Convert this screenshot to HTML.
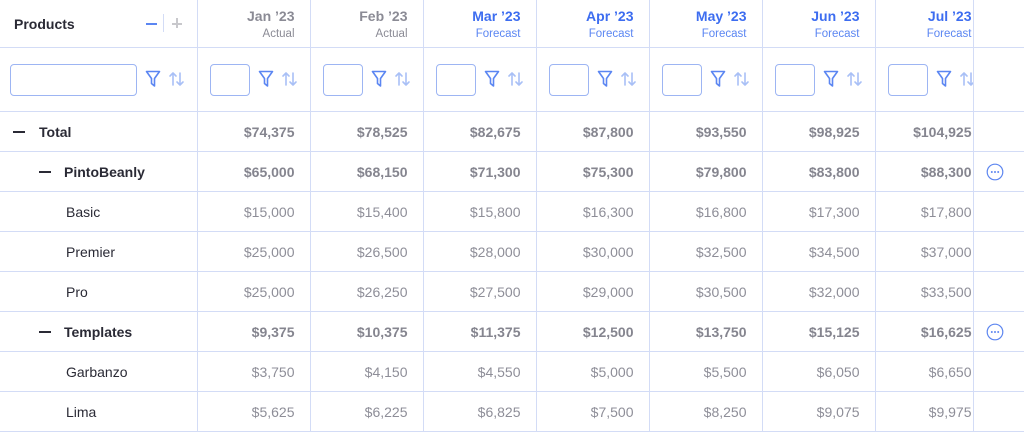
<!DOCTYPE html><html><head><meta charset="utf-8"><style>
*{box-sizing:border-box;margin:0;padding:0}
body{width:1024px;height:429px;overflow:hidden;background:#fff;font-family:"Liberation Sans",sans-serif}
table{border-collapse:collapse;table-layout:fixed;width:1024px}
td{border:1px solid #d3dcf6;overflow:hidden;white-space:nowrap;padding:0;position:relative}
tr:first-child td{border-top:none}
td:first-child{border-left:none}
.h td{height:47px}
.f td{height:64px}
.r td{height:40px;padding-top:1px}
.num{text-align:right;padding-right:15px;font-size:14px;color:#8e8e98}
.b .num{font-weight:bold;color:#85858f}
.last{padding-right:1px!important}
.mh{text-align:right;padding-right:15px}
.mh .m{font-size:14px;font-weight:bold;color:#8b8b95;margin-top:1px}
.mh .s{font-size:11.5px;color:#8b8b95;margin-top:4px}
.fc .m{color:#3d6df0}.fc .s{color:#5b86f2}
.inp{position:absolute;top:16px;left:12px;width:40px;height:32px;border:1px solid #9db5f3;border-radius:4px}
.fi{position:absolute;top:22px}
.lab{font-size:14px;color:#2a2a35;padding-left:66px}
.b .lab{font-weight:bold}
.dash{position:absolute;top:19px;width:12px;height:2px;background:#2a2a35}
.more{position:absolute;left:12px;top:11px}
</style></head><body>
<svg width="0" height="0" style="position:absolute"><defs>
<symbol id="fl" viewBox="0 0 16 18"><path d="M1.5 1.5h13l-5 7v7.5l-3-2.5v-5z" fill="none" stroke="#5b86f2" stroke-width="1.6" stroke-linejoin="round"/></symbol>
<symbol id="so" viewBox="0 0 18 18"><path d="M5 15V3M2 6l3-3 3 3M12 3v12M9 12l3 3 3-3" fill="none" stroke="#a9c0f6" stroke-width="1.6" stroke-linecap="round" stroke-linejoin="round"/></symbol>
<symbol id="mo" viewBox="0 0 18 18"><circle cx="9" cy="9" r="7.8" fill="none" stroke="#5d86f0" stroke-width="1.2"/><circle cx="5.8" cy="9" r="1" fill="#5d86f0"/><circle cx="9" cy="9" r="1" fill="#5d86f0"/><circle cx="12.2" cy="9" r="1" fill="#5d86f0"/></symbol>
</defs></svg>
<table>
<colgroup><col style="width:197px"><col style="width:113px"><col style="width:113px"><col style="width:113px"><col style="width:113px"><col style="width:113px"><col style="width:113px"><col style="width:98px"><col style="width:51px"></colgroup>
<tr class="h">
<td><span style="position:absolute;left:14px;top:16px;font-size:14px;font-weight:bold;color:#2a2a35">Products</span>
<span style="position:absolute;left:146px;top:23px;width:11px;height:2px;background:#5b86f2"></span>
<span style="position:absolute;left:163px;top:14px;width:1px;height:18px;background:#d3dcf6"></span>
<span style="position:absolute;left:172px;top:23px;width:10px;height:2px;background:#c8c8cc"></span>
<span style="position:absolute;left:176px;top:18px;width:2px;height:10px;background:#c8c8cc"></span></td>
<td class="mh"><div class="m">Jan ’23</div><div class="s">Actual</div></td>
<td class="mh"><div class="m">Feb ’23</div><div class="s">Actual</div></td>
<td class="mh fc"><div class="m">Mar ’23</div><div class="s">Forecast</div></td>
<td class="mh fc"><div class="m">Apr ’23</div><div class="s">Forecast</div></td>
<td class="mh fc"><div class="m">May ’23</div><div class="s">Forecast</div></td>
<td class="mh fc"><div class="m">Jun ’23</div><div class="s">Forecast</div></td>
<td class="mh fc last"><div class="m">Jul ’23</div><div class="s">Forecast</div></td>
<td></td></tr>
<tr class="f">
<td><div class="inp" style="left:10px;width:127px"></div><svg class="fi" style="left:145px" width="16" height="18"><use href="#fl"/></svg><svg class="fi" style="left:168px" width="18" height="18"><use href="#so"/></svg></td>
<td><div class="inp"></div><svg class="fi" style="left:60px" width="16" height="18"><use href="#fl"/></svg><svg class="fi" style="left:83px" width="18" height="18"><use href="#so"/></svg></td>
<td><div class="inp"></div><svg class="fi" style="left:60px" width="16" height="18"><use href="#fl"/></svg><svg class="fi" style="left:83px" width="18" height="18"><use href="#so"/></svg></td>
<td><div class="inp"></div><svg class="fi" style="left:60px" width="16" height="18"><use href="#fl"/></svg><svg class="fi" style="left:83px" width="18" height="18"><use href="#so"/></svg></td>
<td><div class="inp"></div><svg class="fi" style="left:60px" width="16" height="18"><use href="#fl"/></svg><svg class="fi" style="left:83px" width="18" height="18"><use href="#so"/></svg></td>
<td><div class="inp"></div><svg class="fi" style="left:60px" width="16" height="18"><use href="#fl"/></svg><svg class="fi" style="left:83px" width="18" height="18"><use href="#so"/></svg></td>
<td><div class="inp"></div><svg class="fi" style="left:60px" width="16" height="18"><use href="#fl"/></svg><svg class="fi" style="left:83px" width="18" height="18"><use href="#so"/></svg></td>
<td><div class="inp"></div><svg class="fi" style="left:60px" width="16" height="18"><use href="#fl"/></svg><svg class="fi" style="left:83px" width="18" height="18"><use href="#so"/></svg></td>
<td></td></tr>
<tr class="r b"><td class="lab" style="padding-left:39px"><span class="dash" style="left:13px"></span>Total</td><td class="num">$74,375</td><td class="num">$78,525</td><td class="num">$82,675</td><td class="num">$87,800</td><td class="num">$93,550</td><td class="num">$98,925</td><td class="num last">$104,925</td><td></td></tr>
<tr class="r b"><td class="lab" style="padding-left:64px"><span class="dash" style="left:39px"></span>PintoBeanly</td><td class="num">$65,000</td><td class="num">$68,150</td><td class="num">$71,300</td><td class="num">$75,300</td><td class="num">$79,800</td><td class="num">$83,800</td><td class="num last">$88,300</td><td><svg class="more" width="18" height="18"><use href="#mo"/></svg></td></tr>
<tr class="r"><td class="lab">Basic</td><td class="num">$15,000</td><td class="num">$15,400</td><td class="num">$15,800</td><td class="num">$16,300</td><td class="num">$16,800</td><td class="num">$17,300</td><td class="num last">$17,800</td><td></td></tr>
<tr class="r"><td class="lab">Premier</td><td class="num">$25,000</td><td class="num">$26,500</td><td class="num">$28,000</td><td class="num">$30,000</td><td class="num">$32,500</td><td class="num">$34,500</td><td class="num last">$37,000</td><td></td></tr>
<tr class="r"><td class="lab">Pro</td><td class="num">$25,000</td><td class="num">$26,250</td><td class="num">$27,500</td><td class="num">$29,000</td><td class="num">$30,500</td><td class="num">$32,000</td><td class="num last">$33,500</td><td></td></tr>
<tr class="r b"><td class="lab" style="padding-left:64px"><span class="dash" style="left:39px"></span>Templates</td><td class="num">$9,375</td><td class="num">$10,375</td><td class="num">$11,375</td><td class="num">$12,500</td><td class="num">$13,750</td><td class="num">$15,125</td><td class="num last">$16,625</td><td><svg class="more" width="18" height="18"><use href="#mo"/></svg></td></tr>
<tr class="r"><td class="lab">Garbanzo</td><td class="num">$3,750</td><td class="num">$4,150</td><td class="num">$4,550</td><td class="num">$5,000</td><td class="num">$5,500</td><td class="num">$6,050</td><td class="num last">$6,650</td><td></td></tr>
<tr class="r"><td class="lab">Lima</td><td class="num">$5,625</td><td class="num">$6,225</td><td class="num">$6,825</td><td class="num">$7,500</td><td class="num">$8,250</td><td class="num">$9,075</td><td class="num last">$9,975</td><td></td></tr>
</table></body></html>
